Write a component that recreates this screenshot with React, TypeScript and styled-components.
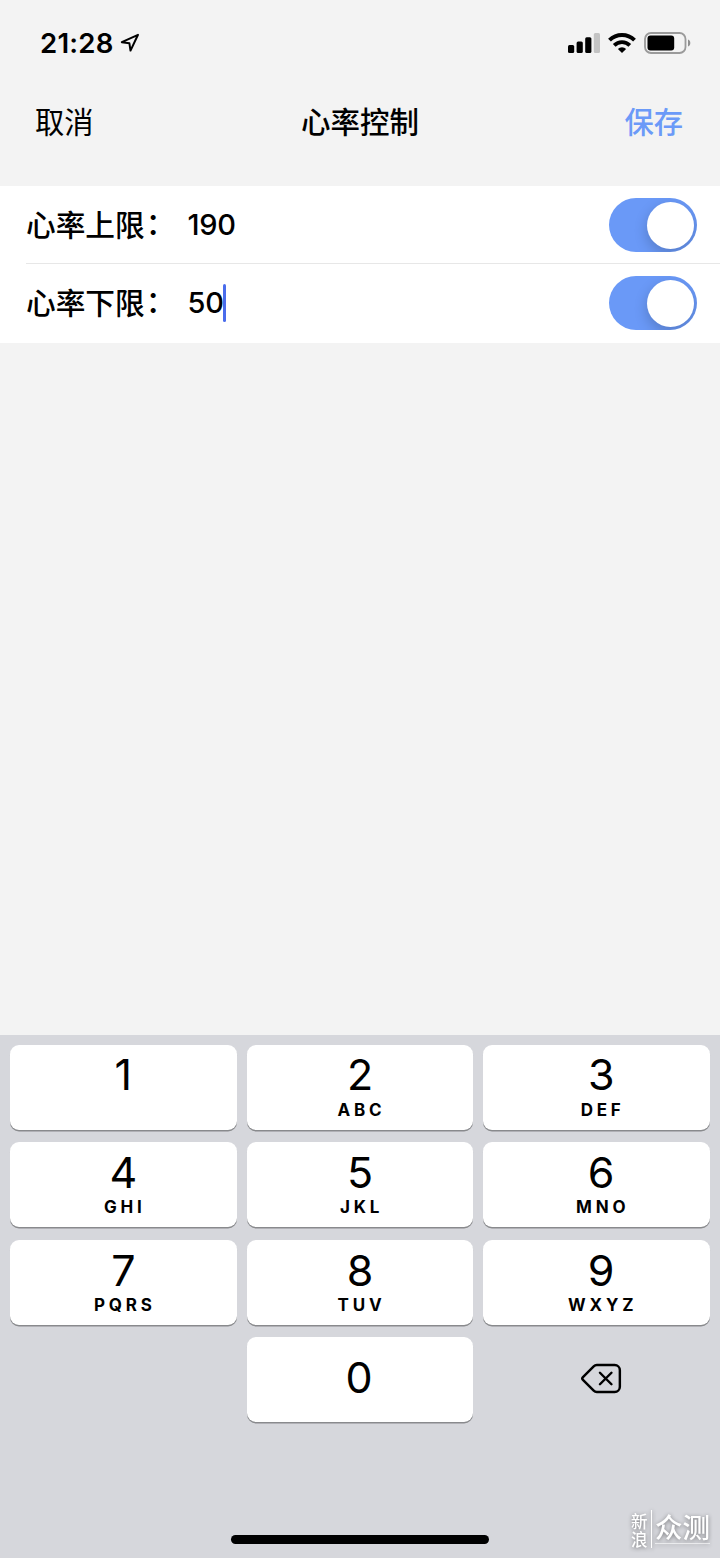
import React from "react";
import styled, { createGlobalStyle } from "styled-components";

const GlobalStyle = createGlobalStyle`
  * { box-sizing: border-box; }
  body { margin: 0; background: #f3f3f3; }
`;

const Screen = styled.div`
  position: relative;
  width: 720px;
  height: 1558px;
  display: flex;
  flex-direction: column;
  overflow: hidden;
  background: #f3f3f3;
  color: #000;
  font-family: Inter, "Noto Sans CJK SC", sans-serif;
`;

const StatusBar = styled.header`
  display: flex;
  align-items: center;
  height: 86px;
  padding: 0 29px 0 40px;
`;

const Clock = styled.span`
  font-size: 27.6px;
  font-weight: 600;
  line-height: 34px;
  letter-spacing: 0.2px;
  width: 80px;
  white-space: nowrap;
`;

const StatusIcons = styled.div`
  display: flex;
  align-items: center;
  gap: 8px;
  margin-left: auto;
`;

const NavBar = styled.nav`
  display: grid;
  grid-template-columns: 1fr auto 1fr;
  align-items: center;
  height: 100px;
  padding: 0 37px 32px 35px;
`;

const NavButton = styled.button<{ $primary?: boolean }>`
  justify-self: ${(p) => (p.$primary ? "end" : "start")};
  padding: 0;
  border: 0;
  background: none;
  font-family: "Noto Sans CJK SC", sans-serif;
  font-size: 29.3px;
  font-weight: ${(p) => (p.$primary ? 500 : 400)};
  line-height: 44px;
  color: ${(p) => (p.$primary ? "#6b9af8" : "#000")};
`;

const Title = styled.h1`
  margin: 0;
  padding-left: 2px;
  font-family: "Noto Sans CJK SC", sans-serif;
  font-size: 29.5px;
  font-weight: 500;
  line-height: 44px;
`;

const Settings = styled.section`
  background: #fff;
  padding-left: 26px;
  height: 157px;
`;

const Row = styled.div`
  display: flex;
  align-items: center;
  height: 78px;
  padding-right: 23px;
  & + & {
    box-shadow: 0 -1px 0 #e7e7e7;
  }
`;

const Label = styled.label`
  display: flex;
  width: 161.5px;
  padding-bottom: 2px;
  font-family: "Noto Sans CJK SC", sans-serif;
  font-size: 29.7px;
  font-weight: 500;
  line-height: 44px;
  white-space: nowrap;
`;

const Colon = styled.span`
  margin: -2px 0 2px 1px;
`;

const Value = styled.span`
  font-size: 29px;
  font-weight: 500;
  line-height: 38px;
  letter-spacing: -0.3px;
`;

const Caret = styled.span`
  width: 3px;
  height: 38px;
  margin-left: -1px;
  border-radius: 1.5px;
  background: #4a6cec;
`;

const Switch = styled.span`
  display: flex;
  justify-content: flex-end;
  align-items: center;
  width: 88px;
  height: 54px;
  margin-left: auto;
  padding-right: 3px;
  border-radius: 27px;
  background: #6a99f7;
  overflow: hidden;
`;

const Knob = styled.span`
  width: 47px;
  height: 47px;
  border-radius: 50%;
  background: #fff;
  box-shadow: 0 5px 14px rgba(0, 0, 0, 0.2);
`;

const Keyboard = styled.section`
  display: flex;
  flex-direction: column;
  height: 523.5px;
  margin-top: auto;
  padding: 10.5px 10px 0;
  background: #d6d7dc;
`;

const Keys = styled.div`
  display: grid;
  grid-template-columns: repeat(3, 1fr);
  grid-auto-rows: 85px;
  gap: 12.4px 10px;
`;

const Key = styled.button<{ $shift?: number; $top?: boolean; $solo?: boolean }>`
  display: flex;
  flex-direction: column;
  align-items: center;
  justify-content: ${(p) => (p.$solo ? "center" : "flex-start")};
  padding: ${(p) => (p.$solo ? "0 2px 6px 0" : `${p.$top ? 3 : 4}px 0 0 ${p.$shift ?? 0}px`)};
  border: 0;
  border-radius: 9px;
  background: #fff;
  color: #000;
  font-family: Inter, sans-serif;
  box-shadow: 0 1.5px 0 #898a8d;
`;

const Digit = styled.span`
  font-size: 43px;
  font-weight: 400;
  line-height: 52px;
`;

const Letters = styled.span<{ $top?: boolean }>`
  margin-top: ${(p) => (p.$top ? 1 : 0)}px;
  font-size: 17px;
  font-weight: 700;
  line-height: 18px;
  letter-spacing: 3.8px;
  margin-right: -3px;
`;

const DeleteKey = styled(Key)`
  grid-column: 3;
  justify-content: center;
  padding: 0 0 3px 9px;
  background: none;
  box-shadow: none;
`;

const ZeroKey = styled(Key)`
  grid-column: 2;
`;

const HomeIndicator = styled.div`
  width: 258px;
  height: 9px;
  margin: auto auto 14px;
  border-radius: 5px;
  background: #000;
`;

const Watermark = styled.div`
  position: absolute;
  left: 631px;
  top: 1510px;
  display: flex;
  color: #fff;
  font-family: "Noto Sans CJK SC", sans-serif;
  filter: drop-shadow(0 1px 2px rgba(0, 0, 0, 0.45));
`;

const WatermarkSide = styled.span`
  width: 21px;
  padding: 2px 3px 0 0;
  border-right: 1px solid #fff;
  font-size: 16.5px;
  font-weight: 500;
  line-height: 18px;
  height: 38px;
`;

const WatermarkMain = styled.span`
  height: 34px;
  margin-left: 3px;
  border-bottom: 1px solid rgba(255, 255, 255, 0.6);
  font-size: 27.5px;
  font-weight: 500;
  line-height: 32px;
`;

const LocationIcon = () => (
  <svg width="20" height="20" viewBox="0 0 20 20" fill="none">
    <path d="M18 1.8 1.8 9.2 9.4 10.3 10.5 17.6Z" stroke="#000" strokeWidth="2" strokeLinejoin="round" />
  </svg>
);

const SignalIcon = () => (
  <svg width="32" height="20" viewBox="0 0 32 20">
    <rect x="0" y="12" width="6.2" height="8" rx="1.5" />
    <rect x="8.6" y="8.5" width="6.2" height="11.5" rx="1.5" />
    <rect x="17.2" y="4.2" width="6.2" height="15.8" rx="1.5" />
    <rect x="25.8" y="0" width="6.2" height="20" rx="1.5" fill="#c3c3c3" />
  </svg>
);

const WifiIcon = () => (
  <svg width="28" height="20" viewBox="0 0 28 20" fill="none">
    <path d="M1.5 7.2a17.8 17.8 0 0 1 25 0" stroke="#000" strokeWidth="4" />
    <path d="M6.2 12.3a11 11 0 0 1 15.6 0" stroke="#000" strokeWidth="3.8" />
    <path d="M14 20 9.9 15.9a5.8 5.8 0 0 1 8.2 0Z" fill="#000" />
  </svg>
);

const BatteryIcon = () => (
  <svg width="47" height="22" viewBox="0 0 47 22">
    <rect x="1" y="1" width="40.5" height="20" rx="6" fill="none" stroke="#9a9a9a" strokeWidth="1.8" />
    <rect x="3.5" y="3.4" width="26.7" height="15.2" rx="3" />
    <path d="M44 7.5c1.4.5 2.3 1.9 2.3 3.5s-.9 3-2.3 3.5Z" fill="#8f8f8f" />
  </svg>
);

const BackspaceIcon = () => (
  <svg width="41" height="31" viewBox="0 0 42 31" fill="none" stroke="#000" strokeWidth="2.5" strokeLinecap="round" strokeLinejoin="round">
    <path d="M16.2 1.7H34.5a5.3 5.3 0 0 1 5.3 5.3v17a5.3 5.3 0 0 1-5.3 5.3H16.2c-1.3 0-2.3-.5-3.2-1.4L2 16.9a2 2 0 0 1 0-2.8L13 3.1c.9-.9 1.9-1.4 3.2-1.4Z" />
    <path d="m19.4 9.6 11.8 11.8M31.2 9.6 19.4 21.4" />
  </svg>
);

const keys = [
  { digit: "1", letters: "" },
  { digit: "2", letters: "ABC" },
  { digit: "3", letters: "DEF" },
  { digit: "4", letters: "GHI" },
  { digit: "5", letters: "JKL" },
  { digit: "6", letters: "MNO" },
  { digit: "7", letters: "PQRS" },
  { digit: "8", letters: "TUV" },
  { digit: "9", letters: "WXYZ" },
];

export default function App() {
  return (
    <Screen>
      <GlobalStyle />
      <StatusBar>
        <Clock>21:28</Clock>
        <LocationIcon />
        <StatusIcons>
          <SignalIcon />
          <WifiIcon />
          <BatteryIcon />
        </StatusIcons>
      </StatusBar>
      <NavBar>
        <NavButton>取消</NavButton>
        <Title>心率控制</Title>
        <NavButton $primary>保存</NavButton>
      </NavBar>
      <Settings>
        <Row>
          <Label>心率上限<Colon>：</Colon></Label>
          <Value>190</Value>
          <Switch><Knob /></Switch>
        </Row>
        <Row>
          <Label>心率下限<Colon>：</Colon></Label>
          <Value>50</Value>
          <Caret />
          <Switch><Knob /></Switch>
        </Row>
      </Settings>
      <Keyboard>
        <Keys>
          {keys.map(({ digit, letters }, i) => (
            <Key key={digit} $shift={i % 3 === 2 ? 9 : 0} $top={i < 3}>
              <Digit>{digit}</Digit>
              <Letters $top={i < 3}>{letters}</Letters>
            </Key>
          ))}
          <ZeroKey $solo><Digit>0</Digit></ZeroKey>
          <DeleteKey aria-label="删除"><BackspaceIcon /></DeleteKey>
        </Keys>
        <HomeIndicator />
      </Keyboard>
      <Watermark>
        <WatermarkSide>新浪</WatermarkSide>
        <WatermarkMain>众测</WatermarkMain>
      </Watermark>
    </Screen>
  );
}
